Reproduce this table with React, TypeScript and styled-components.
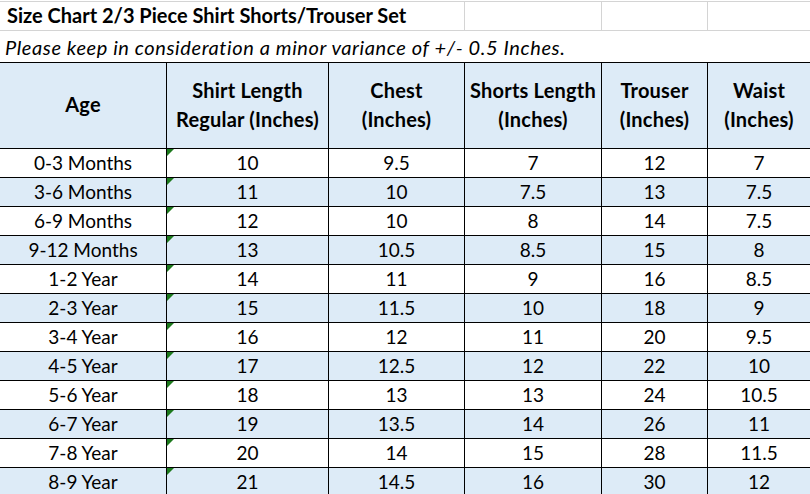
import React from "react";
import styled, { createGlobalStyle } from "styled-components";

const Global = createGlobalStyle`
  html, body { margin: 0; padding: 0; background: #fff; }
  body { font-family: Lato, "Open Sans", sans-serif; color: #000; overflow: hidden; }
`;

const COLS = "167px 162px 136px 137px 106px 103px";

const Sheet = styled.div`
  width: 811px;
  height: 494px;
  overflow: hidden;
  background: #fff;
`;

const TitleRow = styled.div`
  display: grid;
  grid-template-columns: 465px 137px 106px 103px;
  height: 28px;
  border-top: 1px solid #d4d4d4;
  border-bottom: 1px solid #d4d4d4;
  margin-top: 1px;
`;

const TitleCell = styled.div`
  border-right: 1px solid #d4d4d4;
  display: flex;
  align-items: flex-end;
  padding: 0 0 3px 7px;
  font-weight: 700;
  font-size: 20px;
  line-height: 24px;
  white-space: nowrap;
`;

const NoteRow = styled.div`
  height: 28px;
  display: flex;
  align-items: flex-end;
  padding: 0 0 3px 5px;
  font-style: italic;
  font-size: 20px;
  line-height: 24px;
  letter-spacing: 0.6px;
  white-space: nowrap;
  border-bottom: 1px solid #000;
`;

const Grid = styled.div`
  display: grid;
  grid-template-columns: ${COLS};
`;

const HeaderCell = styled.div`
  height: 86px;
  background: #ddebf7;
  border-right: 1px solid #000;
  border-bottom: 1px solid #000;
  display: flex;
  flex-direction: column;
  align-items: center;
  justify-content: center;
  font-weight: 700;
  font-size: 20px;
  letter-spacing: 0.2px;
  line-height: 29px;
  text-align: center;
  white-space: nowrap;
  padding-bottom: 2px;
  box-sizing: border-box;
`;

const DataCell = styled.div<{ $alt: boolean }>`
  position: relative;
  height: 29px;
  box-sizing: border-box;
  background: ${(p) => (p.$alt ? "#ddebf7" : "#fff")};
  border-right: 1px solid #000;
  border-bottom: 1px solid #000;
  display: flex;
  align-items: flex-end;
  justify-content: center;
  padding-bottom: 3px;
  font-size: 19px;
  line-height: 22px;
  white-space: nowrap;
`;

const Indicator = styled.span`
  position: absolute;
  left: 0;
  top: 0;
  width: 0;
  height: 0;
  border-top: 7px solid #1d7a1d;
  border-right: 7px solid transparent;
`;

const headers: string[][] = [
  ["Age"],
  ["Shirt Length", "Regular (Inches)"],
  ["Chest", "(Inches)"],
  ["Shorts Length", "(Inches)"],
  ["Trouser", "(Inches)"],
  ["Waist", "(Inches)"],
];

const rows: string[][] = [
  ["0-3 Months", "10", "9.5", "7", "12", "7"],
  ["3-6 Months", "11", "10", "7.5", "13", "7.5"],
  ["6-9 Months", "12", "10", "8", "14", "7.5"],
  ["9-12 Months", "13", "10.5", "8.5", "15", "8"],
  ["1-2 Year", "14", "11", "9", "16", "8.5"],
  ["2-3 Year", "15", "11.5", "10", "18", "9"],
  ["3-4 Year", "16", "12", "11", "20", "9.5"],
  ["4-5 Year", "17", "12.5", "12", "22", "10"],
  ["5-6 Year", "18", "13", "13", "24", "10.5"],
  ["6-7 Year", "19", "13.5", "14", "26", "11"],
  ["7-8 Year", "20", "14", "15", "28", "11.5"],
  ["8-9 Year", "21", "14.5", "16", "30", "12"],
];

export default function App() {
  return (
    <>
      <Global />
      <Sheet>
        <TitleRow>
          <TitleCell>Size Chart 2/3 Piece Shirt Shorts/Trouser Set</TitleCell>
          <TitleCell />
          <TitleCell />
          <TitleCell />
        </TitleRow>
        <NoteRow>Please keep in consideration a minor variance of +/- 0.5 Inches.</NoteRow>
        <Grid>
          {headers.map((h, i) => (
            <HeaderCell key={i}>
              {h.map((line, j) => (
                <span key={j}>{line}</span>
              ))}
            </HeaderCell>
          ))}
          {rows.map((r, ri) =>
            r.map((v, ci) => (
              <DataCell key={`${ri}-${ci}`} $alt={ri % 2 === 1}>
                {ci === 1 && <Indicator />}
                {v}
              </DataCell>
            ))
          )}
        </Grid>
      </Sheet>
    </>
  );
}
